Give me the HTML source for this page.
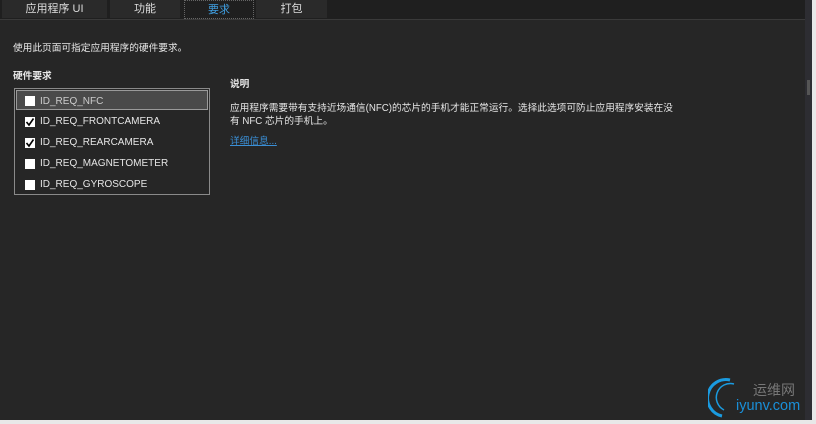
<!DOCTYPE html>
<html><head><meta charset="utf-8"><style>
body{margin:0;width:816px;height:424px;background:#e8e8e8;overflow:hidden;font-family:"Liberation Sans","Noto Sans CJK SC",sans-serif;position:relative}
#win{position:absolute;left:0;top:0;width:812px;height:420px;background:#262626}
#sb{position:absolute;left:805px;top:0;width:7px;height:420px;background:#2d2d32}
#thumb{position:absolute;left:807px;top:80px;width:3px;height:15px;background:#555}
#tabs{position:absolute;left:0;top:0;width:805px;height:19px;background:#1f1f1f;border-bottom:1px solid #3a3a3a}
.tab{position:absolute;top:0;height:18px;background:#2a2a2a;color:#ddd;font-size:11px;text-align:center;line-height:18px}
.sel{border:1px dotted #666;color:#3f9ee0;background:#1f1f1f;height:17px}
.t{position:absolute;color:#e6e6e6;font-size:9.7px;white-space:nowrap}
.b{font-weight:bold}
#list{position:absolute;left:14px;top:88px;width:194px;height:105px;border:1px solid #8a8a8a;background:#262626}
.row{position:absolute;left:1px;width:192px;height:20px;color:#e6e6e6;font-size:10px;line-height:22px}
.row .cb{position:absolute;left:9px;top:6px;width:10px;height:10px;background:#fff}
.row span{position:absolute;left:24px}
.hl{background:#4a4a4a;border:1px solid #9a9a9a;left:1px;top:1px;width:190px;height:18px;line-height:22px}
.cb svg{position:absolute;left:0;top:0}
</style></head><body>
<div id="win">
<div id="tabs">
<div class="tab" style="left:2px;width:105px">应用程序 UI</div>
<div class="tab" style="left:110px;width:70px">功能</div>
<div class="tab sel" style="left:184px;width:68px">要求</div>
<div class="tab" style="left:256px;width:71px">打包</div>
</div>
<div class="t" style="left:13px;top:40px">使用此页面可指定应用程序的硬件要求。</div>
<div class="t b" style="left:13px;top:68px">硬件要求</div>
<div id="list">
<div class="row hl" style="top:1px"><div class="cb" style="left:8px;top:5px"></div><span style="left:23px;color:#ccc">ID_REQ_NFC</span></div>
<div class="row" style="top:22px"><div class="cb"><svg width="10" height="10"><path d="M1.5 5 L4 8 L8.5 1.5" stroke="#000" stroke-width="1.6" fill="none"/></svg></div><span>ID_REQ_FRONTCAMERA</span></div>
<div class="row" style="top:43px"><div class="cb"><svg width="10" height="10"><path d="M1.5 5 L4 8 L8.5 1.5" stroke="#000" stroke-width="1.6" fill="none"/></svg></div><span>ID_REQ_REARCAMERA</span></div>
<div class="row" style="top:64px"><div class="cb"></div><span>ID_REQ_MAGNETOMETER</span></div>
<div class="row" style="top:85px"><div class="cb"></div><span>ID_REQ_GYROSCOPE</span></div>
</div>
<div class="t b" style="left:230px;top:76px">说明</div>
<div class="t" style="left:230px;top:100px">应用程序需要带有支持近场通信(NFC)的芯片的手机才能正常运行。选择此选项可防止应用程序安装在没</div>
<div class="t" style="left:230px;top:113px">有 NFC 芯片的手机上。</div>
<div class="t" style="left:230px;top:133px;color:#3a8fd6;text-decoration:underline">详细信息...</div>
<svg style="position:absolute;left:708px;top:376px" width="40" height="44"><path d="M22 4 A18 18 0 0 0 14 40" stroke="#1a9be0" stroke-width="3" fill="none"/><path d="M26 8 A14 14 0 0 0 16 34" stroke="#1a9be0" stroke-width="1.5" fill="none"/></svg>
<div class="t" style="left:753px;top:380px;font-size:14px;color:#777">运维网</div>
<div class="t" style="left:736px;top:398px;font-size:14.5px;color:#1a8fd8">iyunv.com</div>
</div>
<div id="sb"></div><div id="thumb"></div>
</body></html>
